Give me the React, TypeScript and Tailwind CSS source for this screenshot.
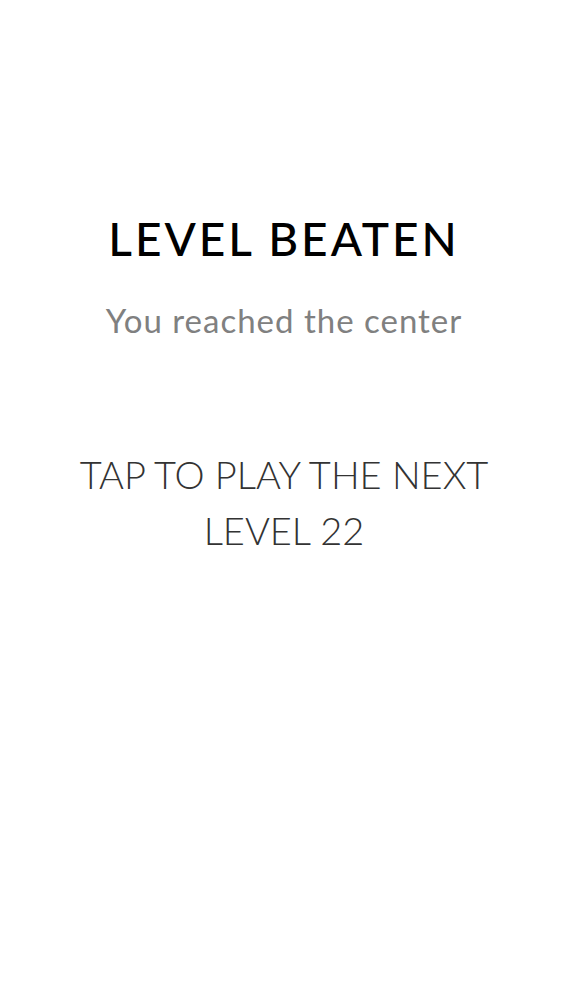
export default function App() {
  return (
    <div className="min-h-screen w-full bg-white flex flex-col items-center text-center" style={{ fontFamily: "Lato, 'Noto Sans', sans-serif" }}>
      <h1 className="mt-[207px] text-[46px] leading-[64px] font-medium tracking-[3px] text-black">LEVEL BEATEN</h1>
      <p className="mt-[27px] text-[33px] leading-[44px] text-[#808080] tracking-[1px]">You reached the center</p>
      <p className="mt-[104px] text-[38px] leading-[56px] font-light text-[#333333]">
        TAP TO PLAY THE NEXT
        <br />
        LEVEL 22
      </p>
    </div>
  )
}
